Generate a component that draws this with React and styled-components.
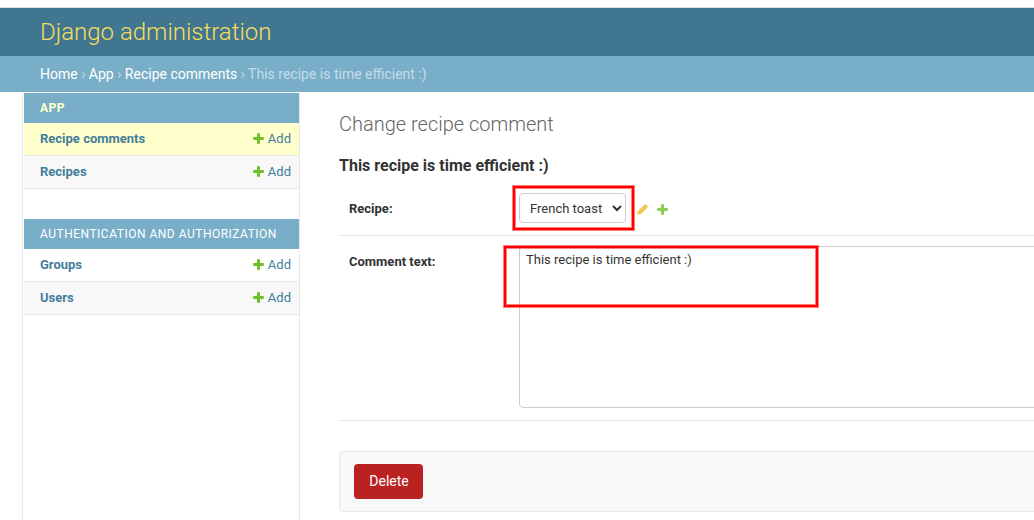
import React from "react";
import styled, { createGlobalStyle } from "styled-components";

const GlobalStyle = createGlobalStyle`
  * { box-sizing: border-box; }
  body {
    margin: 0;
    background: #fff;
    color: #333;
    font-family: Roboto, "Liberation Sans", sans-serif;
    font-size: 13px;
    overflow: hidden;
  }
`;

const Page = styled.div`
  display: flex;
  flex-direction: column;
  height: 520px;
  overflow: hidden;
`;

const TopStrip = styled.div`
  flex: none;
  height: 8px;
  border-bottom: 1px solid #dadce0;
`;

const Header = styled.header`
  flex: none;
  display: flex;
  align-items: center;
  height: 48px;
  padding: 0 40px;
  background: #417690;
`;

const SiteName = styled.h1`
  margin: 0;
  color: #f5dd5d;
  font-size: 24px;
  font-weight: 300;
  line-height: 28px;
`;

const Breadcrumbs = styled.nav`
  flex: none;
  height: 36px;
  padding: 10px 40px;
  background: #79aec8;
  color: #c4dce8;
  font-size: 14px;
  line-height: 16px;
`;

const Crumb = styled.a`
  color: #fff;
`;

const Main = styled.div`
  flex: 1;
  display: flex;
  min-height: 0;
`;

const Sidebar = styled.aside`
  flex: none;
  width: 278px;
  margin-left: 22px;
  padding: 1px 0 0 1px;
  border: solid #e8e8e8;
  border-width: 0 1px;
`;

const Module = styled.section`
  margin-bottom: 30px;
`;

const Caption = styled.h2`
  margin: 0;
  height: 30px;
  padding: 0 16px;
  background: #79aec8;
  color: ${(p) => (p.$current ? "#ffffcc" : "#fff")};
  font-size: 12px;
  font-weight: ${(p) => (p.$current ? 700 : 400)};
  letter-spacing: 0.5px;
  line-height: 30px;
  text-transform: uppercase;
`;

const ModelRow = styled.div`
  display: flex;
  justify-content: space-between;
  height: 33px;
  padding: 0 8px 0 16px;
  border-bottom: 1px solid #e8e8e8;
  background: ${(p) => (p.$current ? "#ffffcc" : p.$striped ? "#f8f8f8" : "#fff")};
  color: #447e9b;
  line-height: 31px;
`;

const ModelName = styled.a`
  font-weight: 700;
`;

const AddLink = styled.a`
  display: flex;
  align-items: center;
  height: 31px;
  gap: 4px;
`;

const Content = styled.main`
  flex: 1;
  min-width: 0;
  padding: 20px 0 0 39px;
`;

const Title = styled.h1`
  margin: 0 0 20px;
  color: #666;
  font-size: 20px;
  font-weight: 300;
  line-height: 24px;
`;

const Subtitle = styled.h2`
  margin: 0 0 8px;
  font-size: 16px;
  font-weight: 700;
  line-height: 19px;
`;

const FormRow = styled.div`
  display: flex;
  align-items: flex-start;
  height: ${(p) => p.$height}px;
  padding: 10px 0 0 10px;
  border-bottom: 1px solid #e8e8e8;
`;

const Label = styled.label`
  flex: none;
  width: 170px;
  padding-top: 8px;
  font-weight: 700;
  line-height: 15px;
`;

const Field = styled.div`
  position: relative;
  display: flex;
  align-items: center;
`;

const Select = styled.select`
  width: 107px;
  height: 30px;
  margin-right: 11px;
  padding: 5px 6px;
  border: 1px solid #ccc;
  border-radius: 4px;
  background: #fff;
  color: #333;
  font: 400 13px Roboto, sans-serif;
`;

const RelatedLinks = styled.div`
  display: flex;
  gap: 9px;
  padding-top: 3px;
`;

const Textarea = styled.textarea`
  flex: none;
  display: block;
  width: 610px;
  height: 162px;
  padding: 5px 6px;
  border: 1px solid #ccc;
  border-radius: 4px;
  color: #333;
  font: 400 13px/15px Roboto, sans-serif;
  resize: none;
`;

const Highlight = styled.div`
  position: absolute;
  left: ${(p) => p.$left}px;
  top: ${(p) => p.$top}px;
  width: ${(p) => p.$width}px;
  height: ${(p) => p.$height}px;
  border: 2px solid #f00;
  box-shadow: 0 0 0 1px rgba(255, 0, 0, 0.5), inset 0 0 0 1px rgba(255, 0, 0, 0.5);
  pointer-events: none;
`;

const SubmitRow = styled.div`
  height: 61px;
  margin-top: 30px;
  padding: 12px 14px;
  border: 1px solid #e8e8e8;
  border-right: 0;
  border-radius: 4px 0 0 4px;
  background: #f8f8f8;
`;

const DeleteButton = styled.button`
  display: block;
  width: 69px;
  height: 35px;
  padding: 0 0 0 1px;
  border: 0;
  border-radius: 4px;
  background: #ba2121;
  color: #fff;
  font: 400 14px/35px Roboto, sans-serif;
`;

const Plus = ({ color = "#70bf2b" }) => (
  <svg width="11" height="11" viewBox="0 0 11 11">
    <path d="M4 0.3h3V4h3.8v3H7v3.7H4V7H0.2V4H4z" fill={color} />
  </svg>
);

const Pencil = () => (
  <svg width="11" height="11" viewBox="0 0 11 11">
    <path d="M0.2 10.8L0.7 7.4 7.4 0.7Q8.3-0.1 9.2 0.7L10.3 1.8Q11.1 2.7 10.3 3.6L3.6 10.3z" fill="#f2bf3b" />
    <path d="M2.6 7.7L7 3.3M7.2 1.5l2.3 2.3M1.1 8.6l1.3 1.3" stroke="#fff0bd" strokeWidth="0.6" fill="none" />
  </svg>
);

const modules = [
  { name: "App", current: true, models: ["Recipe comments", "Recipes"] },
  { name: "Authentication and Authorization", models: ["Groups", "Users"] },
];

export default function App() {
  return (
    <Page>
      <GlobalStyle />
      <TopStrip />
      <Header>
        <SiteName>Django administration</SiteName>
      </Header>
      <Breadcrumbs>
        <Crumb>Home</Crumb> › <Crumb>App</Crumb> › <Crumb>Recipe comments</Crumb> › This recipe is time efficient :)
      </Breadcrumbs>
      <Main>
        <Sidebar>
          {modules.map((m) => (
            <Module key={m.name}>
              <Caption $current={m.current}>{m.name}</Caption>
              {m.models.map((name, i) => (
                <ModelRow key={name} $striped={i % 2 === 1} $current={m.current && i === 0}>
                  <ModelName>{name}</ModelName>
                  <AddLink>
                    <Plus />
                    Add
                  </AddLink>
                </ModelRow>
              ))}
            </Module>
          ))}
        </Sidebar>
        <Content>
          <Title>Change recipe comment</Title>
          <Subtitle>This recipe is time efficient :)</Subtitle>
          <FormRow $height={53}>
            <Label>Recipe:</Label>
            <Field>
              <Select defaultValue="French toast">
                <option>French toast</option>
              </Select>
              <RelatedLinks>
                <Pencil />
                <Plus color="#8dcc55" />
              </RelatedLinks>
              <Highlight $left={-6} $top={-7} $width={121} $height={44} />
            </Field>
          </FormRow>
          <FormRow $height={185}>
            <Label>Comment text:</Label>
            <Field>
              <Textarea defaultValue="This recipe is time efficient :)" />
              <Highlight $left={-15} $top={0} $width={314} $height={61} />
            </Field>
          </FormRow>
          <SubmitRow>
            <DeleteButton>Delete</DeleteButton>
          </SubmitRow>
        </Content>
      </Main>
    </Page>
  );
}
